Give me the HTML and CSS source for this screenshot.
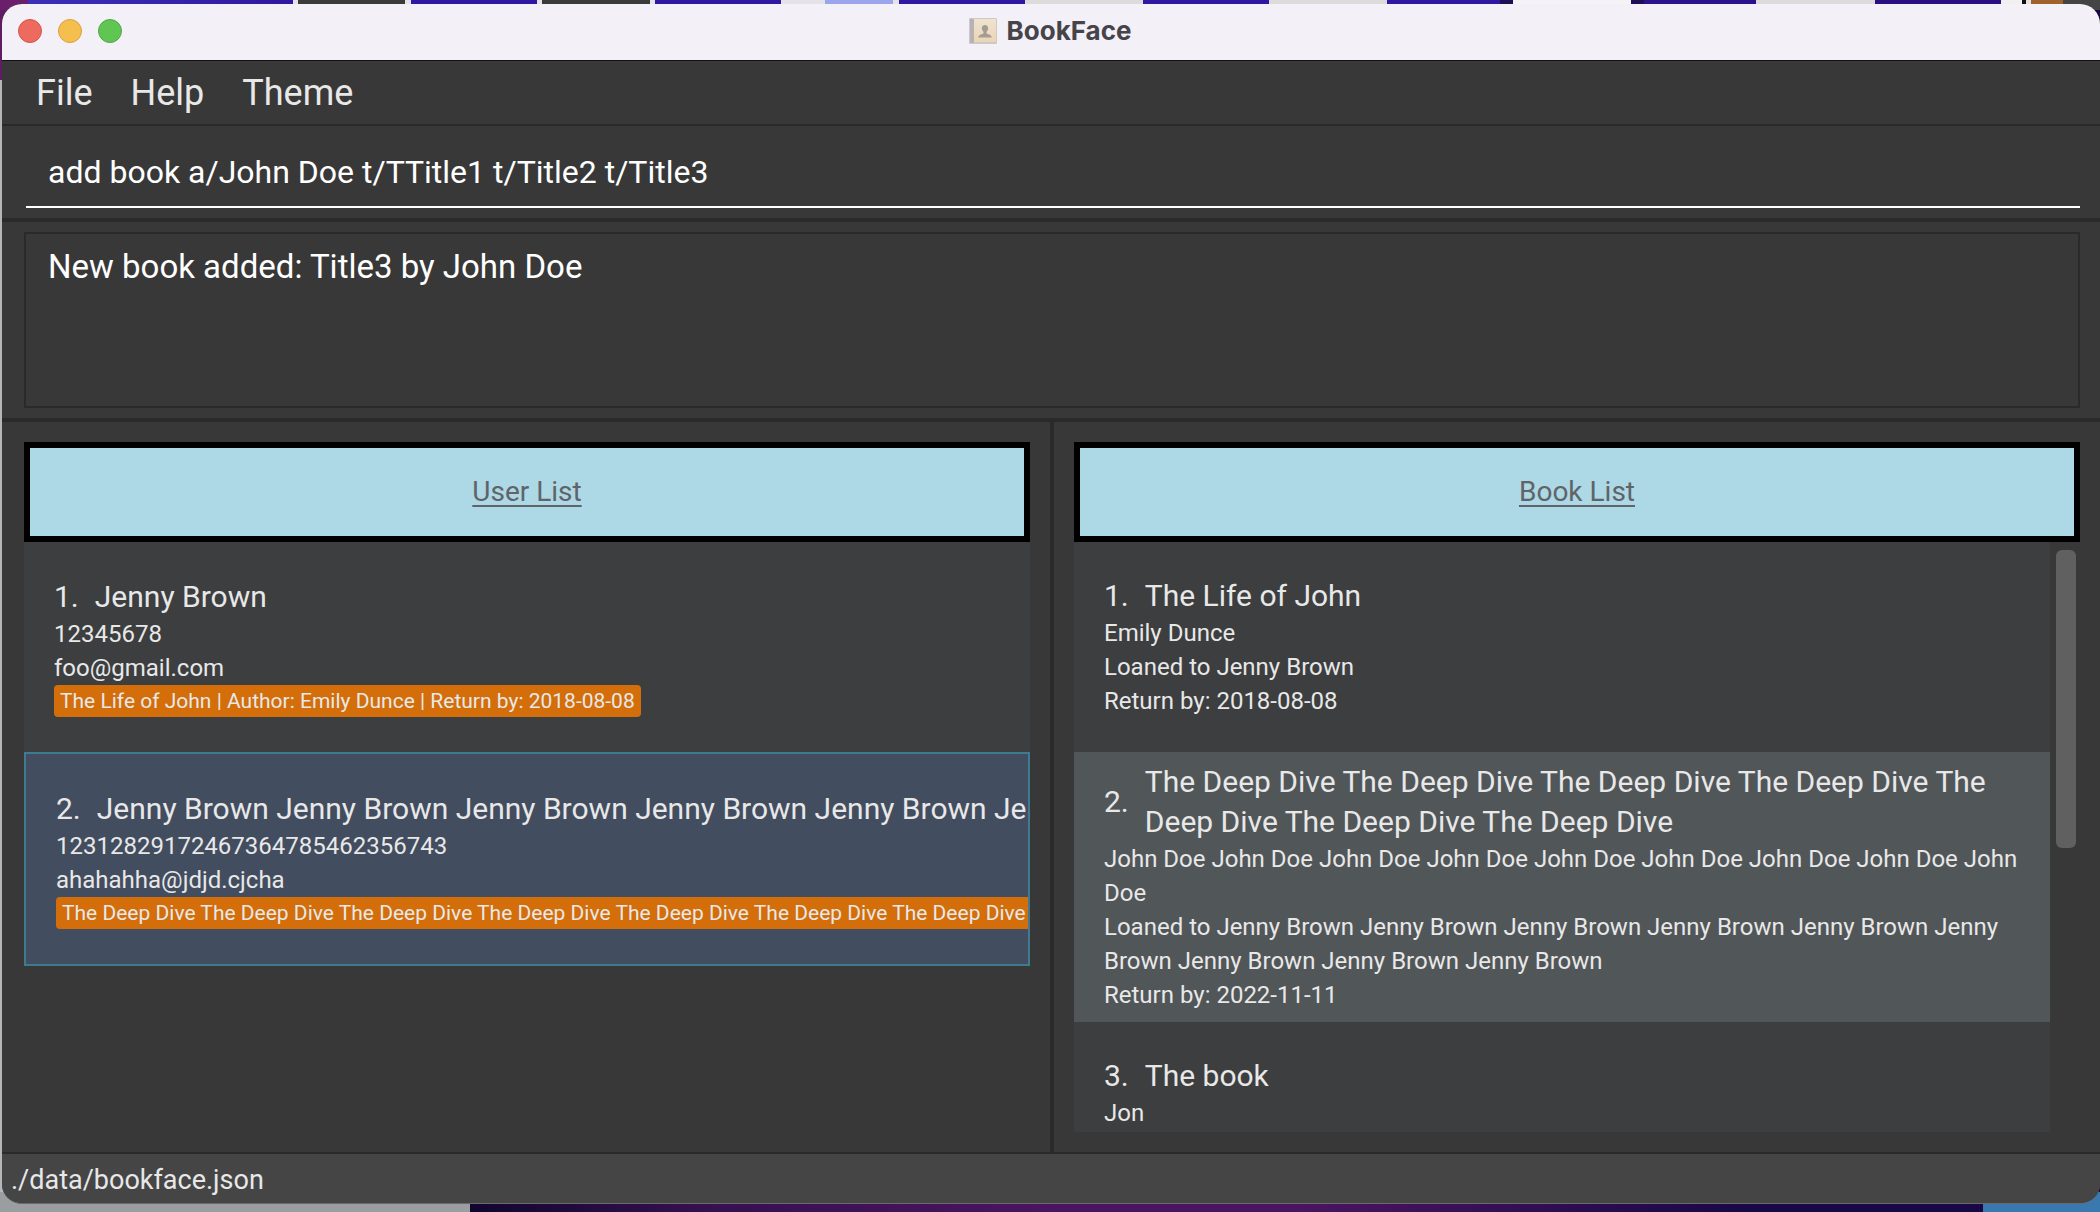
FILE: index.html
```html
<!DOCTYPE html>
<html lang="en">
<head>
<meta charset="utf-8">
<title>BookFace</title>
<link rel="stylesheet" href="styles.css">
</head>
<body>
<div class="window">
  <header class="titlebar">
    <div class="lights">
      <button class="light light-close" aria-label="Close"></button>
      <button class="light light-min" aria-label="Minimize"></button>
      <button class="light light-max" aria-label="Zoom"></button>
    </div>
    <h1 class="title">
      <svg class="title-icon" viewBox="0 0 28 26" width="28" height="26" aria-hidden="true">
        <defs><linearGradient id="cover" x1="0" y1="0" x2="0" y2="1"><stop offset="0" stop-color="#efe2d0"/><stop offset="1" stop-color="#ead6b4"/></linearGradient></defs>
        <rect x="0" y="0" width="28" height="26" rx="1" fill="#cfc8c4"/>
        <rect x="1" y="1" width="4" height="24" fill="#b8b1b6"/>
        <rect x="5" y="1" width="22" height="23" fill="url(#cover)"/>
        <path d="M16 7c-2 0-3.200 1.400-3.200 3.300 0 1.500.7 2.800 1.700 3.500v1.400c-.5 1-5 1.200-5.300 4.300h13.600c-.3-3.100-4.800-3.300-5.300-4.300v-1.400c1-.7 1.700-2 1.700-3.500C19.200 8.400 18 7 16 7z" fill="#a39c95"/>
      </svg>
      <span>BookFace</span>
    </h1>
  </header>
  <nav class="menu">
    <button class="menu-item">File</button>
    <button class="menu-item">Help</button>
    <button class="menu-item">Theme</button>
  </nav>
  <form class="command">
    <input class="command-input" type="text" aria-label="Command" value="add book a/John Doe t/TTitle1 t/Title2 t/Title3">
  </form>
  <section class="result">
    <textarea class="result-text" aria-label="Result" readonly>New book added: Title3 by John Doe</textarea>
  </section>
  <main class="panels">
    <section class="panel">
      <h2 class="panel-title">User List</h2>
      <div class="panel-body">
        <ul class="list">
          <li class="card">
            <h3 class="name"><span>1.</span><span>Jenny Brown</span></h3>
            <p class="line">12345678</p>
            <p class="line">foo@gmail.com</p>
            <p class="tags"><span class="tag">The Life of John | Author: Emily Dunce | Return by: 2018-08-08</span></p>
          </li>
          <li class="card card-selected">
            <h3 class="name"><span>2.</span><span>Jenny Brown Jenny Brown Jenny Brown Jenny Brown Jenny Brown Jenny Brown</span></h3>
            <p class="line">12312829172467364785462356743</p>
            <p class="line">ahahahha@jdjd.cjcha</p>
            <p class="tags"><span class="tag">The Deep Dive The Deep Dive The Deep Dive The Deep Dive The Deep Dive The Deep Dive The Deep Dive The Deep Dive</span></p>
          </li>
        </ul>
      </div>
    </section>
    <section class="panel">
      <h2 class="panel-title">Book List</h2>
      <div class="panel-body">
        <ul class="list list-wrap">
          <li class="card">
            <h3 class="name"><span>1.</span><span>The Life of John</span></h3>
            <p class="line">Emily Dunce</p>
            <p class="line">Loaned to Jenny Brown</p>
            <p class="line">Return by: 2018-08-08</p>
          </li>
          <li class="card card-alt">
            <h3 class="name"><span>2.</span><span>The Deep Dive The Deep Dive The Deep Dive The Deep Dive The Deep Dive The Deep Dive The Deep Dive</span></h3>
            <p class="line">John Doe John Doe John Doe John Doe John Doe John Doe John Doe John Doe John Doe</p>
            <p class="line">Loaned to Jenny Brown Jenny Brown Jenny Brown Jenny Brown Jenny Brown Jenny Brown Jenny Brown Jenny Brown Jenny Brown</p>
            <p class="line">Return by: 2022-11-11</p>
          </li>
          <li class="card card-last">
            <h3 class="name"><span>3.</span><span>The book</span></h3>
            <p class="line">Jon</p>
          </li>
        </ul>
        <div class="scrollbar"><div class="thumb"></div></div>
      </div>
    </section>
  </main>
  <footer class="status">./data/bookface.json</footer>
</div>
</body>
</html>
```
FILE: styles.css
```css
* {
  box-sizing: border-box;
}

html,
body,
h1,
h2,
h3,
p,
ul {
  margin: 0;
  padding: 0;
  font-weight: 400;
}

body {
  height: 100vh;
  padding: 4px 0 8px 2px;
  overflow: hidden;
  font-family: Roboto, "Liberation Sans", sans-serif;
  color: #e8e8e8;
  background:
    linear-gradient(90deg,
      #6b1f6b 28px, #3b30b8 28px, #3018a0 293px,
      #e4e4e8 293px 298px, #3a3c3c 298px 405px, #e4e4e8 405px 411px,
      #2f18a2 411px 537px, #e4e4e8 537px 542px, #3a3c3c 542px 650px, #e4e4e8 650px 655px,
      #2f18a2 655px 781px, #e4e4e8 781px 825px, #9aa5ee 825px 893px, #e4e4e8 893px 899px,
      #2f18a2 899px 1025px, #dcdcdc 1025px 1143px,
      #2f18a2 1143px 1269px, #dcdcdc 1269px 1387px,
      #2f18a2 1387px 1500px, #1c0f55 1500px 1513px, #f4f4f8 1513px 1631px, #1c0f55 1631px 1644px,
      #2c138c 1644px 1756px, #dcdcdc 1756px 1875px,
      #2a1080 1875px 2001px, #f0f0f0 2001px 2022px, #111 2022px 2026px, #e4e4e8 2026px 2031px,
      #a0622c 2031px 2063px, #444 2063px) 0 0 / 100% 10px no-repeat,
    linear-gradient(90deg,
      #9b9ea0 470px, #10062e 470px, #35104f 700px, #4a1560 1050px, #4a1560 1300px,
      #180845 1750px, #180845 1983px, #3a78b0 1983px) 0 100% / 100% 20px no-repeat,
    linear-gradient(180deg, #5e1c62 80px, #b4b6b8 80px) 0 0 / 20px 100% no-repeat,
    #180845;
}

.window {
  height: 100%;
  display: flex;
  flex-direction: column;
  overflow: hidden;
  border-radius: 20px;
  background: #383838;
  border-bottom: 1px solid #6a6a6a;
}

/* Title bar */
.titlebar {
  flex: none;
  height: 57px;
  display: grid;
  grid-template-columns: 1fr auto 1fr;
  align-items: center;
  padding: 0 18px 2px 16px;
  background: #f3f0f7;
  border-bottom: 1px solid #111;
}

.lights {
  display: flex;
  gap: 16px;
}

.light {
  width: 24px;
  height: 24px;
  padding: 0;
  border: 1px solid;
  border-radius: 50%;
}

.light-close {
  background: #ed6a5e;
  border-color: #d5554a;
}

.light-min {
  background: #f5bf4f;
  border-color: #d9a03a;
}

.light-max {
  background: #61c554;
  border-color: #4fa842;
}

.title {
  display: flex;
  align-items: center;
  gap: 10px;
  font-family: Inter, sans-serif;
  font-weight: 700;
  font-size: 26px;
  line-height: 32px;
  color: #464448;
}

.title-icon {
  display: block;
}

/* Menu */
.menu {
  flex: none;
  display: flex;
  padding: 11px 15px 9px;
  border-bottom: 2px solid #2a2a2a;
}

.menu-item {
  padding: 0 19px;
  border: 0;
  background: none;
  font-family: inherit;
  font-size: 36px;
  line-height: 43px;
  color: #e8e8e8;
}

/* Command box */
.command {
  flex: none;
  padding: 20px 20px 10px 24px;
  border-bottom: 4px solid #2a2a2a;
}

.command-input {
  display: block;
  width: 100%;
  height: 62px;
  padding: 0 22px 8px;
  border: 0;
  border-bottom: 2px solid #fff;
  background: none;
  font-family: inherit;
  font-size: 32px;
  line-height: 40px;
  color: #fff;
}

/* Result display */
.result {
  flex: none;
  padding: 10px 20px 10px 22px;
  border-bottom: 4px solid #2a2a2a;
}

.result-text {
  display: block;
  width: 100%;
  height: 176px;
  padding: 13px 22px;
  border: 2px solid #2a2a2a;
  background: none;
  font-family: inherit;
  font-size: 33px;
  line-height: 40px;
  color: #fff;
  resize: none;
}

/* Lists */
.panels {
  flex: 1;
  min-height: 0;
  display: grid;
  grid-template-columns: calc(50% - 1px) 1fr;
}

.panel {
  min-width: 0;
  min-height: 0;
  display: flex;
  flex-direction: column;
  padding: 20px 20px 20px 22px;
}

.panel + .panel {
  padding-left: 20px;
  border-left: 4px solid #2a2a2a;
}

.panel-title {
  flex: none;
  height: 100px;
  display: flex;
  align-items: center;
  justify-content: center;
  border: 6px solid #000;
  background: #add8e6;
  font-size: 28px;
  line-height: 36px;
  color: #606468;
  text-decoration: underline 2px;
  text-underline-offset: 4px;
}

.panel-body {
  flex: 1;
  min-height: 0;
  display: flex;
}

.list {
  flex: 1;
  min-width: 0;
  overflow: hidden;
  list-style: none;
  white-space: nowrap;
}

.list-wrap {
  white-space: normal;
}

.card {
  min-height: 210px;
  display: flex;
  flex-direction: column;
  justify-content: center;
  padding: 10px 10px 10px 30px;
  overflow: hidden;
  background: #3c3e3f;
}

.card-alt {
  background: #515658;
}

.card-last {
  justify-content: flex-start;
  padding-top: 34px;
}

.card-selected {
  min-height: 214px;
  padding-right: 0;
  border: 2px solid #3e7b91;
  background: #424d5f;
}

.name {
  display: flex;
  align-items: center;
  gap: 16px;
  font-size: 30px;
  line-height: 40px;
}

.line {
  font-size: 24px;
  line-height: 34px;
}

.tags {
  display: flex;
}

.tag {
  padding: 0 6px;
  border-radius: 4px;
  background: #d36e0a;
  font-size: 21px;
  line-height: 32px;
}

.scrollbar {
  flex: none;
  width: 30px;
  padding: 8px 4px 8px 6px;
}

.thumb {
  height: 52%;
  border-radius: 6px;
  background: #606060;
}

/* Status bar */
.status {
  flex: none;
  padding: 9px 9px 5px;
  border-top: 2px solid #2a2a2a;
  background: #454545;
  font-size: 27px;
  line-height: 35px;
}
```
